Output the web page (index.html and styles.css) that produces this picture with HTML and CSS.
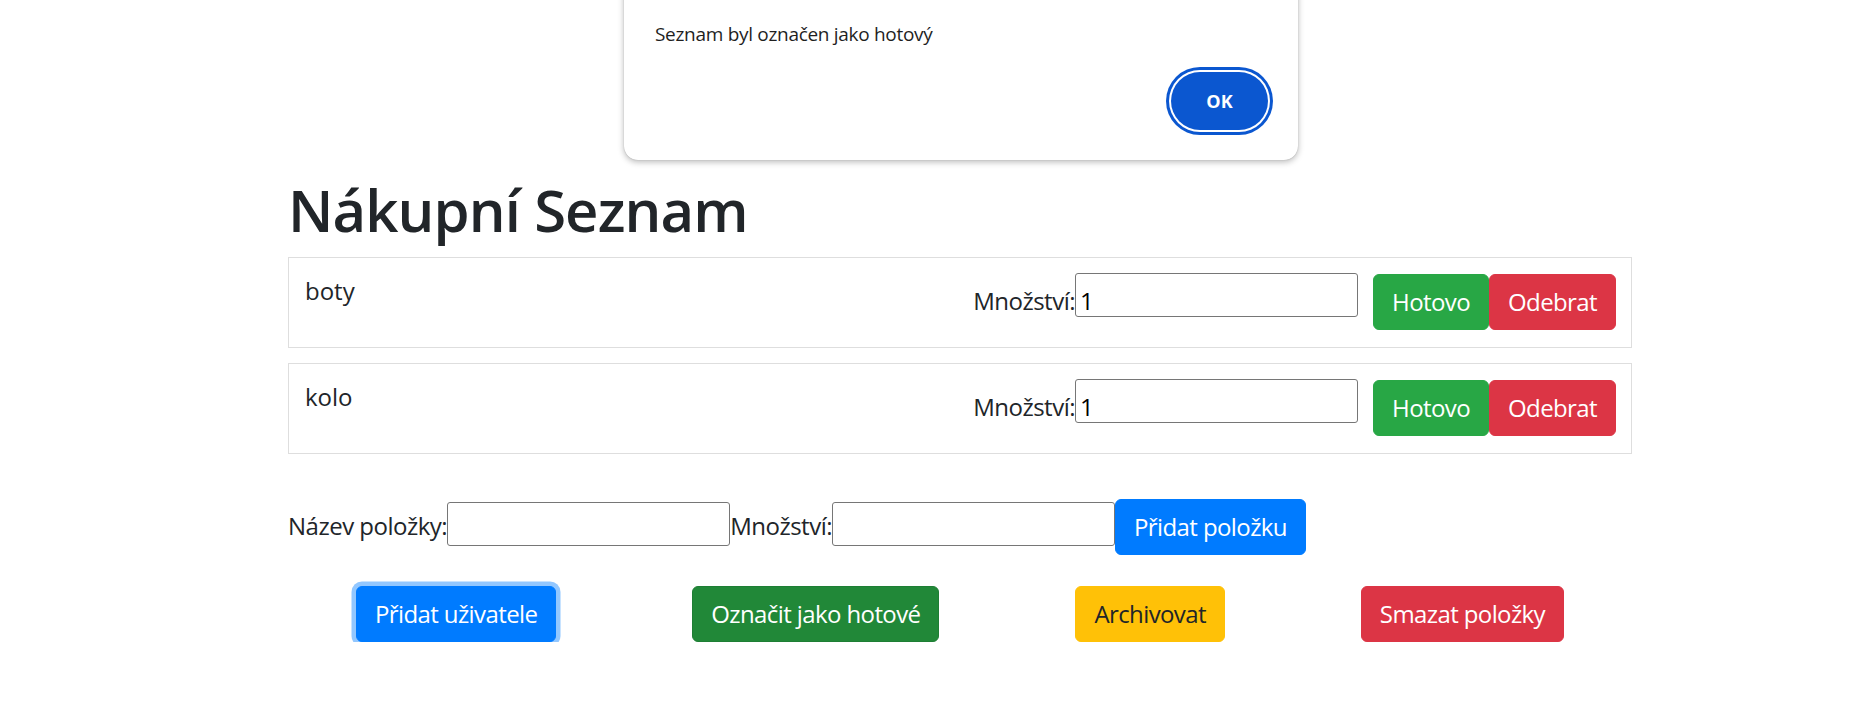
FILE: index.html
```html
<!DOCTYPE html>
<html lang="cs">
<head>
<meta charset="utf-8">
<title>Nákupní Seznam</title>
<link rel="stylesheet" href="styles.css">
</head>
<body>
<div class="page">
  <h1 class="title">Nákupní Seznam</h1>
  <div class="item">
    <div class="item-name">boty</div>
    <div class="item-controls">
      <label class="lbl">Množství:</label><input class="field" type="text" value="1">
      <div class="btn-group">
        <button class="btn btn-success">Hotovo</button><button class="btn btn-danger">Odebrat</button>
      </div>
    </div>
  </div>
  <div class="item">
    <div class="item-name">kolo</div>
    <div class="item-controls">
      <label class="lbl">Množství:</label><input class="field" type="text" value="1">
      <div class="btn-group">
        <button class="btn btn-success">Hotovo</button><button class="btn btn-danger">Odebrat</button>
      </div>
    </div>
  </div>
  <div class="add-row">
    <label class="lbl">Název položky:</label><input class="field field-add" type="text"><label class="lbl">Množství:</label><input class="field field-add" type="text"><button class="btn btn-primary">Přidat položku</button>
  </div>
  <div class="actions">
    <button class="btn btn-primary focused">Přidat uživatele</button>
    <button class="btn btn-success-dark">Označit jako hotové</button>
    <button class="btn btn-warning">Archivovat</button>
    <button class="btn btn-danger">Smazat položky</button>
  </div>
</div>
<div class="dialog">
  <p class="dialog-text">Seznam byl označen jako hotový</p>
  <div class="dialog-foot">
    <button class="dialog-ok">OK</button>
  </div>
</div>
</body>
</html>
```
FILE: styles.css
```css
html, body {
  margin: 0;
  padding: 0;
  background: #fff;
}
body {
  font-family: "Open Sans", "Noto Sans", sans-serif;
  font-size: 24px;
  line-height: 36px;
  color: #212529;
}
.page {
  margin-left: 288px;
  width: 1344px;
  padding-top: 174px;
}
.title {
  font-size: 58px;
  line-height: 72px;
  font-weight: 600;
  margin: 0 0 11px;
  letter-spacing: -0.9px;
}
.item {
  display: flex;
  justify-content: space-between;
  align-items: flex-start;
  border: 1.5px solid #dedede;
  padding: 16px 15px 17px 16px;
  margin-bottom: 15px;
}
.item-name {
  margin-top: -1px;
}
.item-controls {
  display: flex;
  align-items: flex-start;
}
.lbl {
  letter-spacing: -0.5px;
  margin-top: 9px;
}
.field {
  box-sizing: border-box;
  width: 283px;
  height: 44px;
  margin-top: -1px;
  border: 1.5px solid #767676;
  border-radius: 3px;
  padding: 11px 4px 0;
  line-height: 30px;
  font-family: inherit;
  font-size: 24px;
  color: #000;
  background: #fff;
}
.btn-group {
  display: flex;
  margin-left: 15px;
}
.btn {
  font-family: inherit;
  font-size: 24px;
  line-height: 36px;
  padding: 9px 18px;
  border: 1.5px solid transparent;
  border-radius: 6px;
  color: #fff;
  cursor: pointer;
  letter-spacing: -0.6px;
}
.btn-success { background: #28a745; border-color: #28a745; }
.btn-success-dark { background: #218838; border-color: #1e7e34; }
.btn-danger { background: #dc3545; border-color: #dc3545; }
.btn-primary { background: #007bff; border-color: #007bff; }
.btn-warning { background: #ffc107; border-color: #ffc107; color: #212529; }
.focused {
  box-shadow: 0 0 0 4.5px rgba(38, 143, 255, 0.5);
}
.add-row {
  display: flex;
  align-items: flex-start;
  margin-top: 45px;
}
.field-add {
  margin-top: 3px;
}
.actions {
  display: flex;
  justify-content: space-around;
  margin-top: 31px;
}
.dialog {
  position: absolute;
  left: 624px;
  top: -20px;
  width: 674px;
  height: 180px;
  box-sizing: border-box;
  background: #fff;
  border-radius: 14px;
  box-shadow: 0 2px 6px rgba(0, 0, 0, 0.28), 0 0 1px rgba(0, 0, 0, 0.3);
  padding: 0 25px 25px 31px;
  display: flex;
  flex-direction: column;
  justify-content: space-between;
}
.dialog-text {
  margin: 41px 0 0;
  font-family: "Open Sans", "Noto Sans", sans-serif;
  font-size: 19px;
  line-height: 26px;
  color: #1f1f1f;
  letter-spacing: -0.3px;
}
.dialog-foot {
  display: flex;
  justify-content: flex-end;
}
.dialog-ok {
  margin: 5px;
  width: 97px;
  height: 58px;
  border: none;
  border-radius: 29px;
  background: #0b57d0;
  color: #fff;
  font-family: "Open Sans", "Noto Sans", sans-serif;
  font-weight: 700;
  font-size: 18px;
  box-shadow: 0 0 0 2px #fff, 0 0 0 5px #0b57d0;
}
```
